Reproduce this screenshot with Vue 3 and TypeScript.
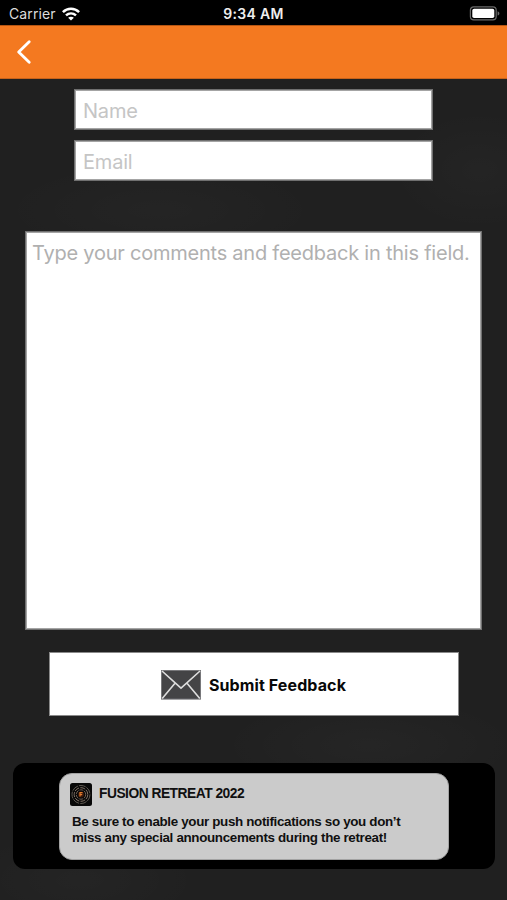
<script setup lang="ts">
import { ref } from 'vue'

const name = ref('')
const email = ref('')
const comments = ref('')
const noticeLines: string[] = [
  'Be sure to enable your push notifications so you don’t',
  'miss any special announcements during the retreat!',
]
</script>

<template>
  <div class="screen">
    <header class="status">
      <div class="carrier">
        <span class="carrier-name">Carrier</span>
        <svg class="wifi" viewBox="0 0 18 14" width="18" height="14">
          <g fill="none" stroke="#fff" stroke-width="2.5">
            <path d="M0.9 5.2C5.5 0.7 12.5 0.7 17.1 5.2" />
            <path d="M4 8.4C6.9 5.7 11.1 5.7 14 8.4" />
          </g>
          <path fill="#fff" d="M9 13.6L6.1 10.7C7.7 9.3 10.3 9.3 11.9 10.7Z" />
        </svg>
      </div>
      <span class="time">9:34 AM</span>
      <svg class="battery" viewBox="0 0 31 15" width="31" height="15">
        <rect x="1.4" y="0.9" width="25.8" height="13" rx="3.4" fill="#000" stroke="#6a6a6a" stroke-width="1.2" />
        <rect x="3.3" y="2.7" width="22" height="9.4" rx="1.8" fill="#fff" />
        <path d="M28.6 5.2C31 6 31 8.8 28.6 9.6Z" fill="#6a6a6a" />
      </svg>
    </header>

    <nav class="navbar">
      <button class="back" type="button" aria-label="Back">
        <svg viewBox="0 0 16 26" width="16" height="26">
          <path d="M13.2 2.8L2.7 13L13.2 23.2" fill="none" stroke="#fff" stroke-width="2.9" stroke-linecap="round" stroke-linejoin="round" />
        </svg>
      </button>
    </nav>

    <form class="form" @submit.prevent>
      <input v-model="name" class="field" type="text" placeholder="Name" />
      <input v-model="email" class="field" type="text" placeholder="Email" />
      <textarea v-model="comments" class="comments" placeholder="Type your comments and feedback in this field."></textarea>
      <button class="submit" type="submit">
        <svg class="mail" viewBox="0 0 40 30" width="40" height="30">
          <rect x="0.5" y="0.5" width="39" height="28.6" fill="#444446" stroke="#77777a" stroke-width="1" />
          <path d="M1 1L20 18.2L39 1M1.2 28.6L14.2 13M38.8 28.6L25.8 13" fill="none" stroke="#dedede" stroke-width="1.6" />
        </svg>
        <span class="submit-label">Submit Feedback</span>
      </button>
    </form>

    <section class="banner">
      <div class="card">
        <div class="card-head">
          <svg class="app-icon" viewBox="0 0 22 23" width="22" height="23">
            <rect width="22" height="23" rx="2.5" fill="#080808" />
            <g fill="none">
              <circle cx="11" cy="11.5" r="9" stroke="#5e5851" stroke-width="1" stroke-dasharray="7 1" />
              <circle cx="11" cy="11.5" r="6.8" stroke="#827266" stroke-width="1" stroke-dasharray="5 1.2" />
              <circle cx="11" cy="11.5" r="4.7" stroke="#77685c" stroke-width="0.9" stroke-dasharray="4 1" />
            </g>
            <circle cx="11" cy="11.5" r="3" fill="#39180a" />
            <path d="M10 13.6V9.7H12.6M10 11.6H12.2" fill="none" stroke="#e27a2c" stroke-width="1.2" />
          </svg>
          <span class="card-title">FUSION RETREAT 2022</span>
        </div>
        <p class="card-text">
          <span v-for="line in noticeLines" :key="line" class="line">{{ line }}</span>
        </p>
      </div>
    </section>
  </div>
</template>

<style>
body {
  margin: 0;
  background: #202020;
}
</style>

<style scoped>
.screen {
  box-sizing: border-box;
  width: 507px;
  height: 900px;
  overflow: hidden;
  display: flex;
  flex-direction: column;
  font-family: Inter, 'Liberation Sans', sans-serif;
  background:
    radial-gradient(ellipse 90px 60px at 480px 170px, rgba(255, 255, 255, 0.02), transparent),
    radial-gradient(ellipse 150px 50px at 370px 745px, rgba(255, 255, 255, 0.025), transparent),
    radial-gradient(ellipse 160px 50px at 160px 210px, rgba(255, 255, 255, 0.02), transparent),
    radial-gradient(ellipse 120px 50px at 80px 880px, rgba(255, 255, 255, 0.02), transparent),
    #202020;
}
.status {
  box-sizing: border-box;
  height: 25px;
  flex: none;
  display: grid;
  grid-template-columns: 1fr auto 1fr;
  align-items: center;
  padding: 2px 7px 0 9px;
  background: #000;
  color: #fff;
}
.carrier {
  display: flex;
  align-items: center;
  gap: 6px;
}
.carrier-name {
  font-size: 14px;
  line-height: 18px;
  letter-spacing: 0.12px;
  color: #dcdcdc;
}
.time {
  margin-left: -2px;
  font-size: 14px;
  line-height: 18px;
  font-weight: 600;
  letter-spacing: 0.3px;
  color: #eee;
}
.battery {
  justify-self: end;
}
.navbar {
  box-sizing: border-box;
  height: 54px;
  flex: none;
  display: flex;
  align-items: center;
  padding-left: 16px;
  background: #f47920;
  border-top: 1px solid #b55512;
  border-bottom: 1px solid #c7621a;
}
.back {
  display: flex;
  padding: 0;
  border: 0;
  background: none;
}
.form {
  display: flex;
  flex-direction: column;
  align-items: center;
  padding-top: 10px;
}
.field {
  box-sizing: border-box;
  width: 359px;
  height: 41px;
  margin: 0 0 10px;
  padding: 2px 8px 0;
  border: 1px solid #707070;
  box-shadow: inset 0 0 0 1px #a4a4a4;
  border-radius: 0;
  outline: 0;
  background: #fff;
  font-family: inherit;
  font-size: 20px;
  letter-spacing: -0.2px;
}
.field::placeholder {
  color: #c5c5c5;
  opacity: 1;
}
.comments {
  box-sizing: border-box;
  display: block;
  width: 457px;
  height: 399px;
  margin: 40px 0 22px;
  padding: 9px 6px;
  border: 1px solid #707070;
  box-shadow: inset 0 0 0 1px #a4a4a4;
  border-radius: 0;
  outline: 0;
  resize: none;
  overflow: hidden;
  background: #fff;
  font-family: inherit;
  font-size: 20px;
  letter-spacing: -0.23px;
  line-height: 25px;
}
.comments::placeholder {
  color: #b0b0b0;
  opacity: 1;
  white-space: nowrap;
}
.submit {
  box-sizing: border-box;
  width: 410px;
  height: 64px;
  display: flex;
  align-items: center;
  justify-content: center;
  gap: 8px;
  padding: 1px 0 0;
  border: 1px solid #8a8a8a;
  border-radius: 0;
  background: #fff;
  color: #080808;
  font-family: inherit;
}
.submit-label {
  font-size: 16px;
  font-weight: 700;
  line-height: 20px;
  letter-spacing: 0.11px;
}
.banner {
  box-sizing: border-box;
  width: 482px;
  height: 106px;
  margin: 47px 0 0 13px;
  padding: 10px 46px;
  border-radius: 12px;
  background: #000;
}
.card {
  box-sizing: border-box;
  height: 87px;
  padding: 9px 11px;
  border-radius: 13px;
  background: #cbcbcb;
  border: 1px solid #a2a2a2;
  color: #101010;
  font-family: 'Liberation Sans', sans-serif;
  font-weight: 700;
}
.card-head {
  display: flex;
  align-items: center;
  gap: 7px;
  height: 22px;
  margin-left: -1px;
}
.card-title {
  margin-top: -1px;
  font-size: 13.8px;
  letter-spacing: -0.5px;
}
.card-text {
  margin: 9px 0 0 1px;
  font-size: 13.4px;
  line-height: 16px;
  letter-spacing: -0.34px;
}
.line {
  display: block;
  white-space: nowrap;
}
</style>
